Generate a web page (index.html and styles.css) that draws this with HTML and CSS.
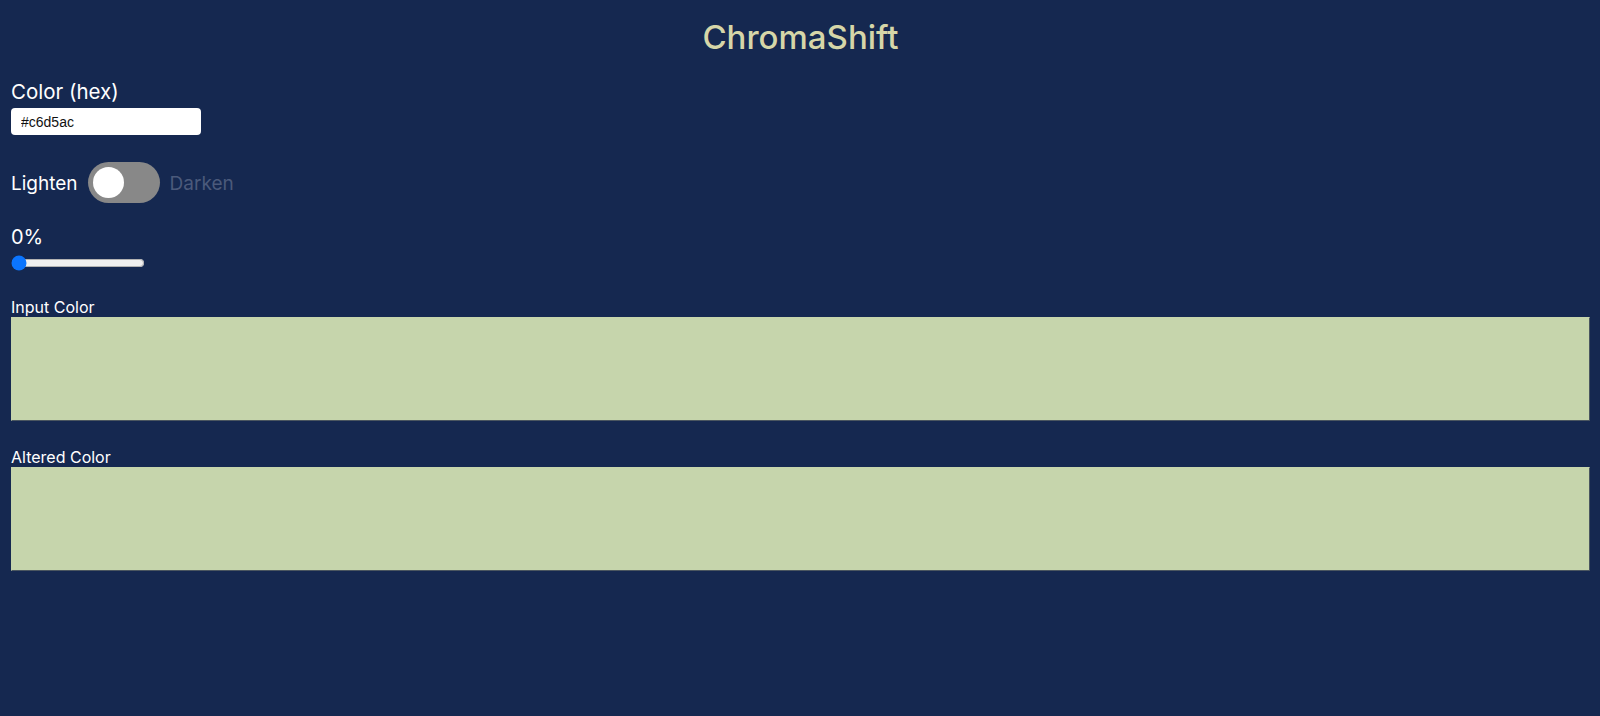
FILE: index.html
```html
<!DOCTYPE html>
<html lang="en">
<head>
<meta charset="utf-8">
<title>ChromaShift</title>
<link rel="stylesheet" href="styles.css">
</head>
<body>
<main class="app">
  <h1 class="title">ChromaShift</h1>
  <section class="field">
    <label class="field-label" for="hex">Color (hex)</label>
    <input class="hex-input" id="hex" type="text" value="#c6d5ac">
  </section>
  <section class="toggle-row">
    <span class="toggle-text active">Lighten</span>
    <span class="switch"><span class="knob"></span></span>
    <span class="toggle-text muted">Darken</span>
  </section>
  <section class="amount">
    <span class="amount-label">0%</span>
    <input class="range" type="range" min="0" max="100" value="0">
  </section>
  <section class="swatch-group">
    <span class="swatch-label">Input Color</span>
    <div class="swatch" style="background:#c6d5ac"></div>
  </section>
  <section class="swatch-group">
    <span class="swatch-label">Altered Color</span>
    <div class="swatch" style="background:#c6d5ac"></div>
  </section>
</main>
</body>
</html>
```

FILE: styles.css
```css
html, body {
  margin: 0;
  padding: 0;
  background: #152850;
  height: 100%;
}

body {
  font-family: Inter, "Noto Sans", "Liberation Sans", sans-serif;
  color: #ffffff;
}

.app {
  display: flex;
  flex-direction: column;
  padding: 17px 10px 0 11px;
}

.title {
  margin: 0;
  text-align: center;
  font-size: 33px;
  font-weight: 500;
  line-height: normal;
  color: #d6d6a8;
}

.field {
  display: flex;
  flex-direction: column;
  align-items: flex-start;
  margin-top: 22px;
}

.field-label {
  font-size: 20.5px;
  line-height: normal;
}

.hex-input {
  margin-top: 4px;
  box-sizing: border-box;
  width: 190px;
  height: 27px;
  border: none;
  border-radius: 4px;
  background: #ffffff;
  color: #111111;
  font-family: "Liberation Sans", Arial, sans-serif;
  font-size: 14px;
  padding: 0 10px;
  outline: none;
}

.toggle-row {
  display: flex;
  align-items: center;
  margin-top: 27px;
}

.toggle-text {
  font-size: 19px;
  line-height: normal;
  position: relative;
  top: 1px;
}

.toggle-text.muted {
  color: #4b5a7b;
  margin-left: 10px;
}

.switch {
  display: flex;
  align-items: center;
  box-sizing: border-box;
  width: 72px;
  height: 41px;
  border-radius: 21px;
  background: #888888;
  padding: 0 5px;
  margin-left: 10px;
}

.knob {
  width: 31px;
  height: 31px;
  border-radius: 50%;
  background: #ffffff;
}

.amount {
  display: flex;
  flex-direction: column;
  align-items: flex-start;
  margin-top: 22px;
}

.amount-label {
  font-size: 20px;
  line-height: normal;
}

.range {
  margin: 6px 0 0 0;
  width: 134px;
  accent-color: #0b75ff;
}

.swatch-group {
  display: flex;
  flex-direction: column;
  margin-top: 26px;
}

.swatch-label {
  font-size: 16px;
  line-height: normal;
}

.swatch {
  box-sizing: border-box;
  height: 104px;
  border: 1px solid #c6d5ac;
  border-bottom-color: #4a5660;
  border-right-color: #4a5660;
}
```
